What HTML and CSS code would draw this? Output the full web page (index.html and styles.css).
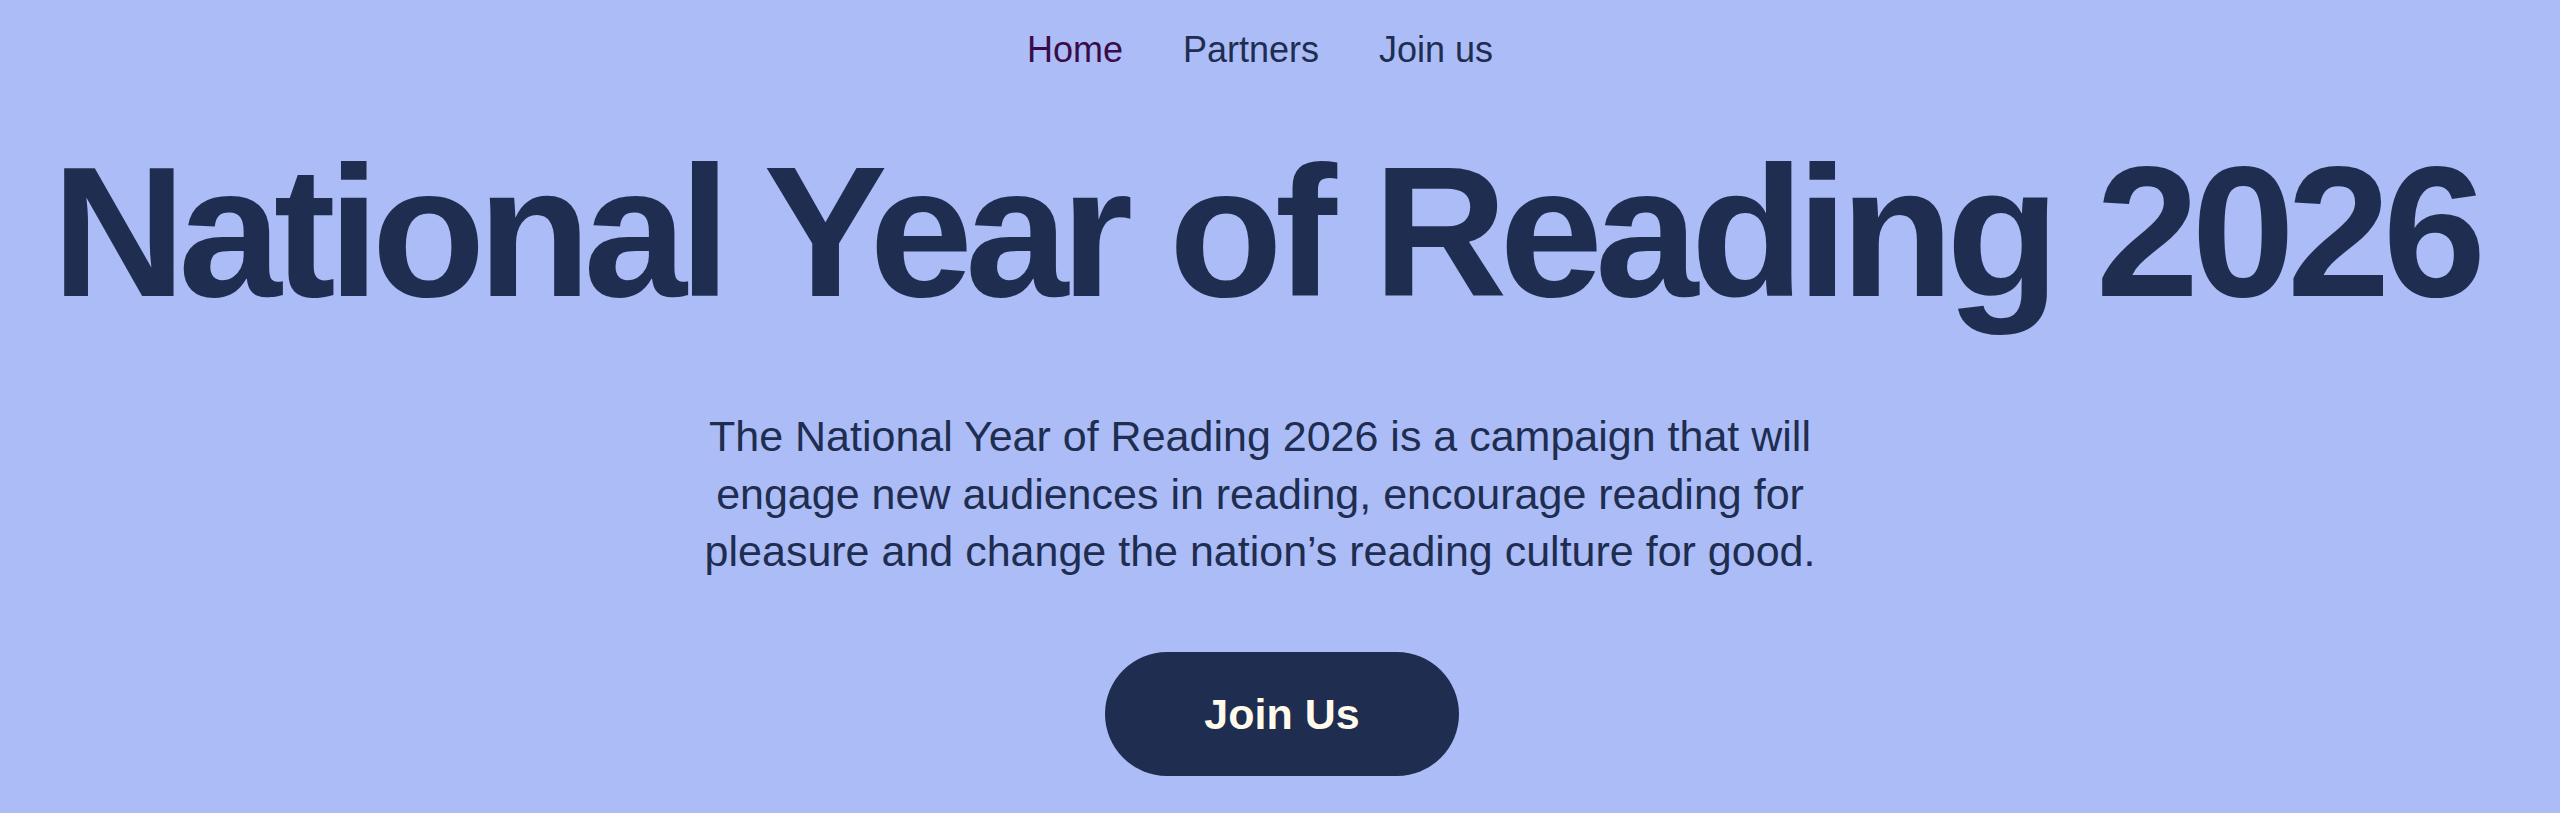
FILE: index.html
```html
<!DOCTYPE html>
<html lang="en">
<head>
<meta charset="utf-8">
<title>National Year of Reading 2026</title>
<link rel="stylesheet" href="styles.css">
</head>
<body>
<header class="site-header">
  <nav class="nav">
    <ul class="nav-list">
      <li><a class="nav-link nav-link--active" href="#">Home</a></li>
      <li><a class="nav-link" href="#">Partners</a></li>
      <li><a class="nav-link" href="#">Join us</a></li>
    </ul>
  </nav>
</header>
<main class="hero">
  <h1 class="hero-title">National Year of Reading 2026</h1>
  <div class="hero-copy">
    <p class="hero-text">The National Year of Reading 2026 is a campaign that will engage new audiences in reading, encourage reading for pleasure and change the nation’s reading culture for good.</p>
  </div>
  <a class="hero-button" href="#">Join Us</a>
</main>
</body>
</html>
```

FILE: styles.css
```css
html, body {
  margin: 0;
  padding: 0;
}

body {
  background: #abbcf6;
  color: #1e2d50;
  font-family: "Liberation Sans", Arial, sans-serif;
  min-height: 813px;
}

.site-header {
  padding-top: 29px;
}

.nav-list {
  list-style: none;
  margin: 0;
  padding: 0 40px 0 0;
  display: flex;
  justify-content: center;
  gap: 60px;
}

.nav-link {
  font-size: 36px;
  line-height: 41px;
  color: #1e2d50;
  text-decoration: none;
  display: block;
}

.nav-link--active {
  color: #3b0b47;
}

.hero {
  display: flex;
  flex-direction: column;
  align-items: center;
}

.hero-title {
  margin: 69px 0 0;
  padding-right: 30px;
  font-size: 186px;
  line-height: 186px;
  font-weight: 700;
  letter-spacing: -0.042em;
  white-space: nowrap;
  color: #1e2d50;
}

.hero-copy {
  padding-right: 40px;
  margin-top: 83px;
}

.hero-text {
  margin: 0;
  max-width: 1180px;
  font-size: 43px;
  line-height: 57.5px;
  text-align: center;
  color: #1e2d50;
}

.hero-button {
  margin-top: 71px;
  margin-left: 4px;
  display: block;
  padding: 37px 99px;
  font-size: 43px;
  line-height: 50px;
  font-weight: 700;
  color: #fffaeb;
  background: #1e2d50;
  border-radius: 62px;
  text-decoration: none;
}
```
